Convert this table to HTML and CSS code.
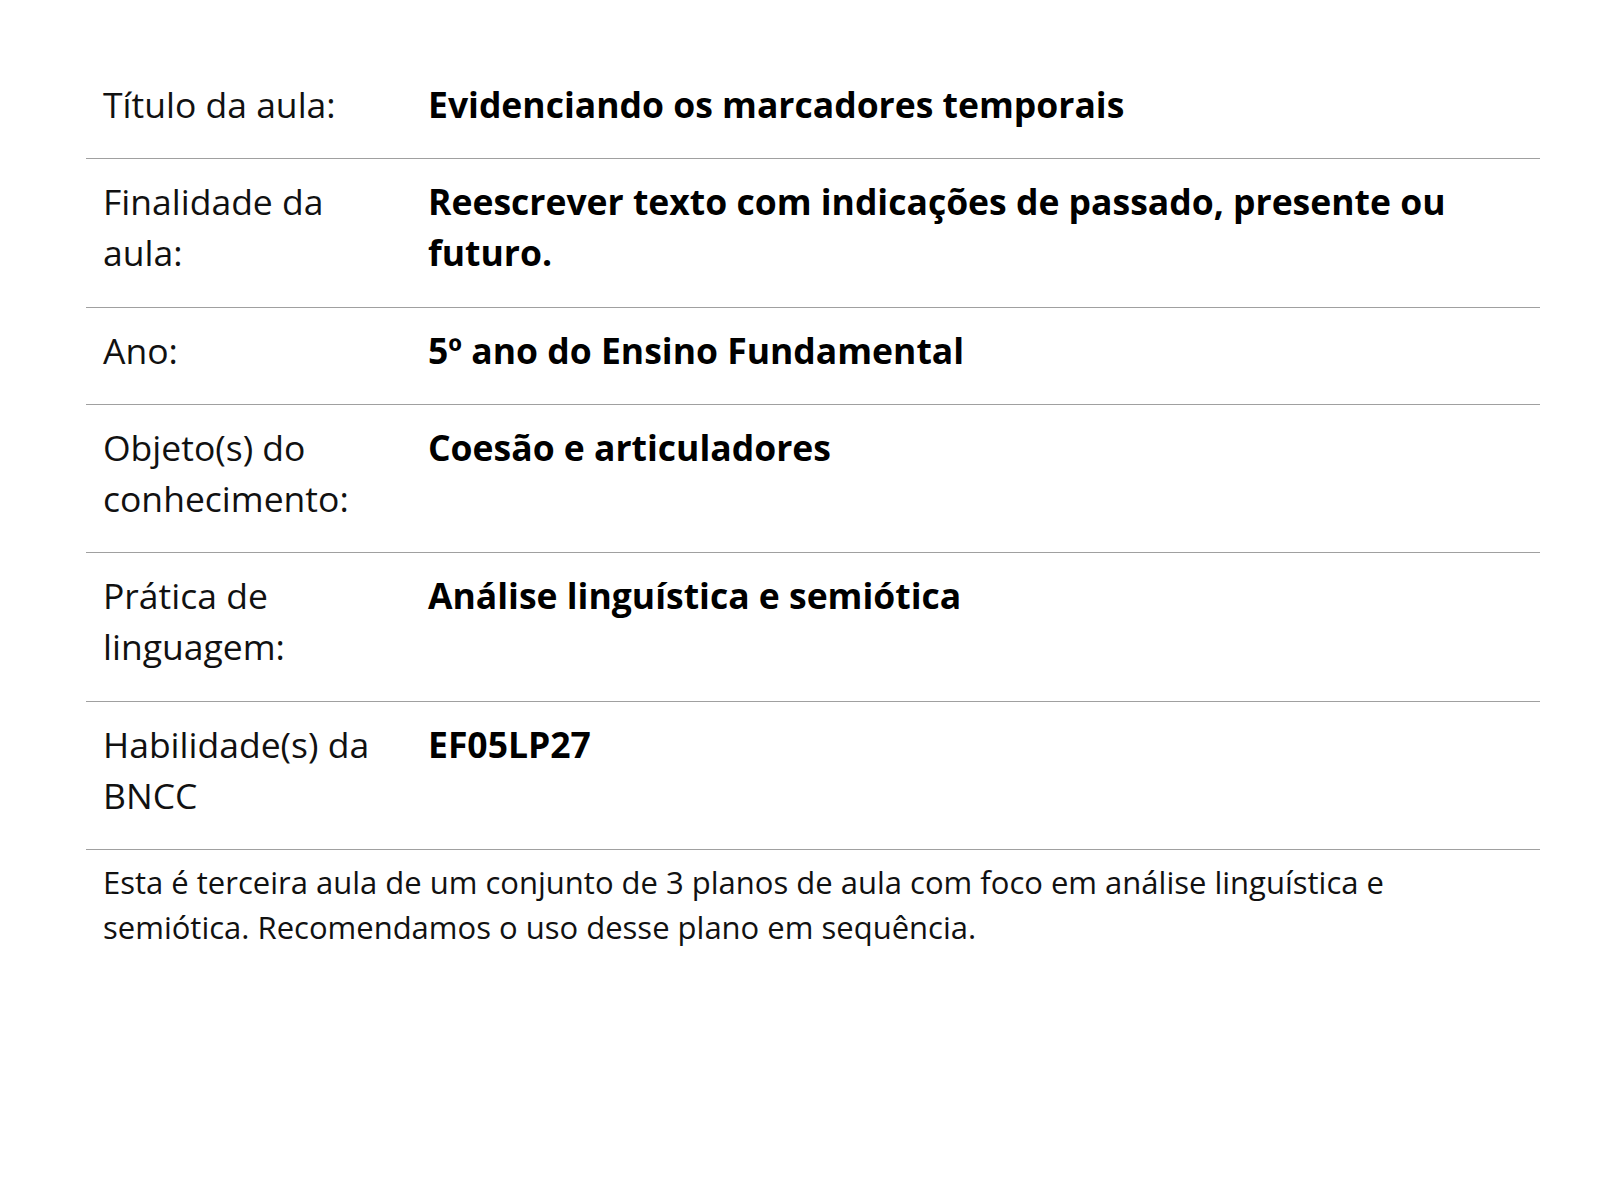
FILE: index.html
```html
<!DOCTYPE html>
<html lang="pt-BR">
<head>
<meta charset="utf-8">
<title>Plano de aula</title>
<link rel="stylesheet" href="styles.css">
</head>
<body>
<main class="plan">
  <div class="row">
    <div class="label">Título da aula:</div>
    <div class="value">Evidenciando os marcadores temporais</div>
  </div>
  <div class="row">
    <div class="label">Finalidade da aula:</div>
    <div class="value">Reescrever texto com indicações de passado, presente ou futuro.</div>
  </div>
  <div class="row">
    <div class="label">Ano:</div>
    <div class="value">5º ano do Ensino Fundamental</div>
  </div>
  <div class="row">
    <div class="label">Objeto(s) do conhecimento:</div>
    <div class="value">Coesão e articuladores</div>
  </div>
  <div class="row">
    <div class="label">Prática de linguagem:</div>
    <div class="value">Análise linguística e semiótica</div>
  </div>
  <div class="row">
    <div class="label">Habilidade(s) da BNCC</div>
    <div class="value">EF05LP27</div>
  </div>
  <p class="note">Esta é terceira aula de um conjunto de 3 planos de aula com foco em análise linguística e semiótica. Recomendamos o uso desse plano em sequência.</p>
</main>
</body>
</html>
```

FILE: styles.css
```css
html, body {
  margin: 0;
  padding: 0;
  background: #fff;
}

body {
  font-family: "Open Sans", "Noto Sans", sans-serif;
  color: #111;
}

.plan {
  width: 1454px;
  margin-left: 86px;
  padding-top: 62px;
}

.row {
  display: grid;
  grid-template-columns: 342px 1fr;
  padding: 17px 0 28px;
  border-bottom: 1px solid #a0a0a0;
  font-size: 35.5px;
  line-height: 51.2px;
}

.label {
  padding-left: 17px;
  padding-right: 40px;
  font-weight: 400;
}

.value {
  font-weight: 700;
  color: #000;
}

.note {
  margin: 0;
  padding: 10px 30px 0 17px;
  font-size: 31px;
  line-height: 45px;
}
```
